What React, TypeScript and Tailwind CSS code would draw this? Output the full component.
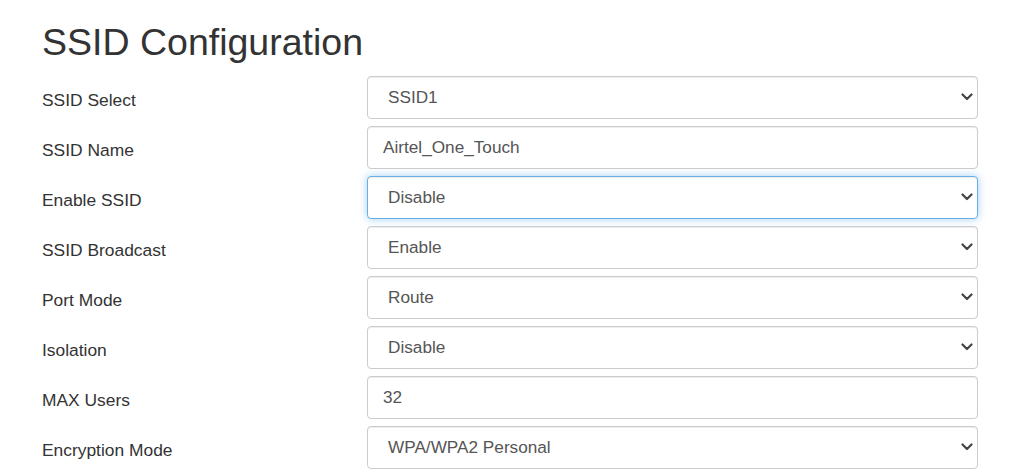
import { useState } from 'react';

type Row = { label: string; kind: 'select' | 'input'; value: string; options?: string[]; focus?: boolean };

const rows: Row[] = [
  { label: 'SSID Select', kind: 'select', value: 'SSID1', options: ['SSID1', 'SSID2', 'SSID3', 'SSID4'] },
  { label: 'SSID Name', kind: 'input', value: 'Airtel_One_Touch' },
  { label: 'Enable SSID', kind: 'select', value: 'Disable', options: ['Enable', 'Disable'], focus: true },
  { label: 'SSID Broadcast', kind: 'select', value: 'Enable', options: ['Enable', 'Disable'] },
  { label: 'Port Mode', kind: 'select', value: 'Route', options: ['Route', 'Bridge'] },
  { label: 'Isolation', kind: 'select', value: 'Disable', options: ['Enable', 'Disable'] },
  { label: 'MAX Users', kind: 'input', value: '32' },
  { label: 'Encryption Mode', kind: 'select', value: 'WPA/WPA2 Personal', options: ['None', 'WPA2 Personal', 'WPA/WPA2 Personal'] },
];

function Chevron() {
  return (
    <svg className="pointer-events-none absolute right-[5px] top-1/2 -translate-y-1/2" width="12" height="8" viewBox="0 0 12 8">
      <path d="M1.5 1.5 L6 6 L10.5 1.5" fill="none" stroke="#444" strokeWidth="2.2" strokeLinecap="round" strokeLinejoin="round" />
    </svg>
  );
}

function Field({ row }: { row: Row }) {
  const [val, setVal] = useState(row.value);
  const box = row.focus
    ? 'border-[#66afe9] shadow-[inset_0_1px_1px_rgba(0,0,0,0.075),0_0_8px_rgba(102,175,233,0.6)]'
    : 'border-[#ccc] shadow-[inset_0_1px_1px_rgba(0,0,0,0.075)]';
  if (row.kind === 'input') {
    return (
      <input value={val} onChange={e => setVal(e.target.value)} className={`w-full h-[42.5px] rounded-[4px] border bg-white pl-[15px] pr-[15px] text-[17.2px] text-[#555] outline-none ${box}`} />
    );
  }
  return (
    <div className="relative w-full">
      <select value={val} onChange={e => setVal(e.target.value)} className={`w-full h-[42.5px] appearance-none rounded-[4px] border bg-white pl-[20px] pr-[30px] pt-[2px] text-[17.2px] text-[#555] outline-none ${box}`}>
        {row.options!.map(o => <option key={o} value={o}>{o}</option>)}
      </select>
      <Chevron />
    </div>
  );
}

export default function App() {
  return (
    <div className="min-h-screen bg-white pt-[22px] pl-[42px] text-[#333]" style={{ fontFamily: '"Liberation Sans", Arial, sans-serif' }}>
      <h2 className="text-[37.5px] leading-[41px] mb-[13px] font-normal">SSID Configuration</h2>
      <div className="flex flex-col gap-[7.5px]">
        {rows.map(r => (
          <div key={r.label} className="flex items-start">
            <label className="w-[325px] shrink-0 pt-[12px] text-[17.4px] leading-[25px]">{r.label}</label>
            <div className="w-[611px]"><Field row={r} /></div>
          </div>
        ))}
      </div>
    </div>
  );
}
